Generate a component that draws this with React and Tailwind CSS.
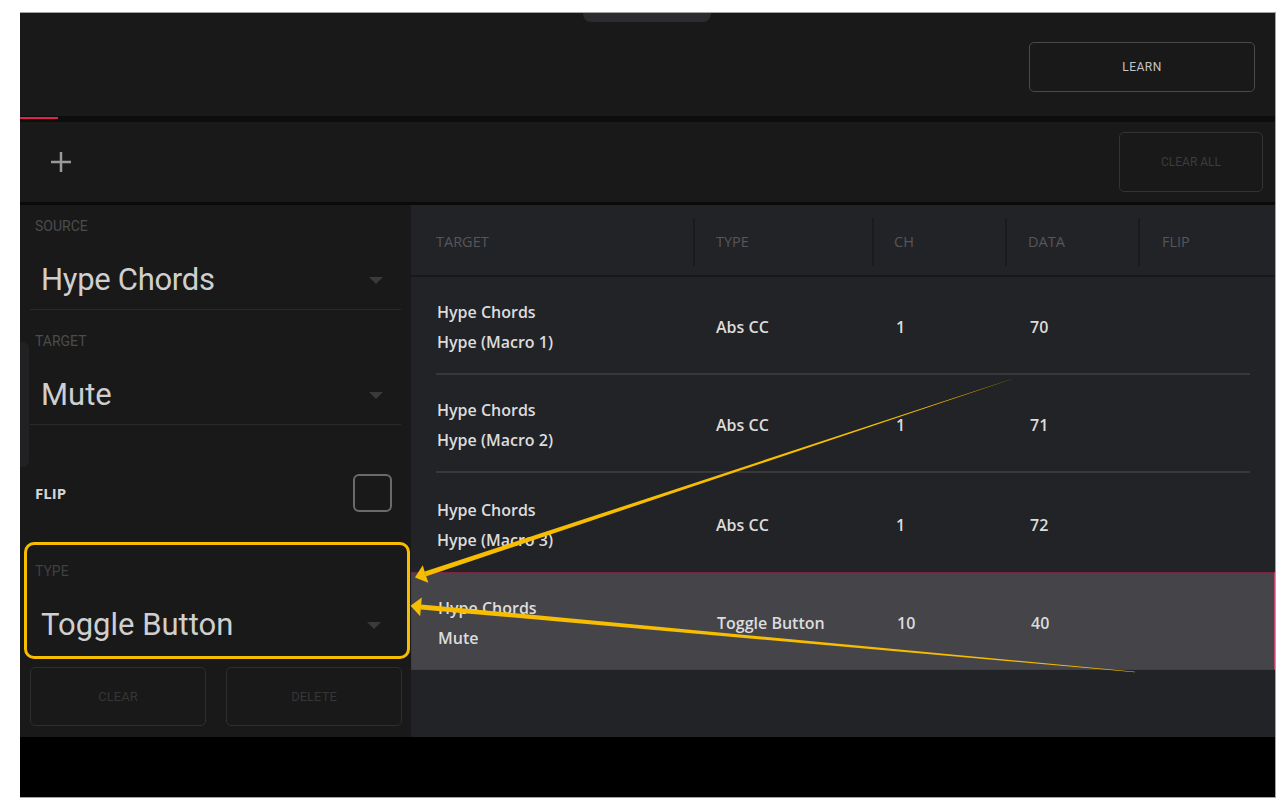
import React from "react";

const F = { fontFamily: "Roboto, 'Open Sans', sans-serif" };
const O = { fontFamily: "'Open Sans', Roboto, sans-serif" };

function Caret() {
  return (
    <svg width="16" height="9" viewBox="0 0 16 9" className="shrink-0">
      <polygon points="1,1 15,1 8,8" fill="#3a3a3c" />
    </svg>
  );
}

function Row({ a, b, type, ch, data, hl }) {
  return (
    <div
      style={O}
      className={
        "flex items-center pt-[4px] text-[16px] font-semibold text-[#dcdcdc] " +
        (hl
          ? "h-[98px] bg-[#454449] border border-[#7a2340] border-r-[#c4456a]"
          : "h-[96px]")
      }
    >
      <div className="w-[282px] pl-[26px] flex flex-col leading-[30px]">
        <span>{a}</span>
        <span>{b}</span>
      </div>
      <div className="w-[179px] pl-[23px]">{type}</div>
      <div className="w-[133px] pl-[24px]">{ch}</div>
      <div className="w-[133px] pl-[25px]">{data}</div>
    </div>
  );
}

function Sep() {
  return <div className="mx-[25px] h-[2px] bg-[#38383c]" />;
}

function HSep() {
  return <div className="w-[2px] h-[48px] bg-[#1b1b1e] shrink-0" />;
}

export default function App() {
  return (
    <div className="w-[1286px] h-[807px] bg-white relative overflow-hidden" style={F}>
      <div className="ml-[20px] mt-[12px] w-[1256px] h-[786px] border-t border-r border-b border-[#a4a4a4] flex flex-col">
        {/* top bar */}
        <div className="h-[103px] bg-[#191919] relative flex justify-end pt-[29px] pr-[20px]">
          <div className="absolute left-[563px] top-0 w-[128px] h-[9px] rounded-b-[8px] bg-[#2b2b30]" />
          <div className="w-[226px] h-[50px] rounded-[5px] border-[1.5px] border-[#4a4a4a] flex items-center justify-center text-[12px] text-[#c4c4c4] tracking-[0.5px]">
            LEARN
          </div>
        </div>
        {/* divider */}
        <div className="h-[6px] bg-[#0d0d0d] relative">
          <div className="absolute left-0 top-[1px] w-[38px] h-[2px] bg-[#e5204c]" />
        </div>
        {/* second bar */}
        <div className="h-[80px] bg-[#191919] flex items-center justify-between pl-[30px] pr-[12px]">
          <svg width="22" height="22" viewBox="0 0 22 22">
            <path d="M11 1v20M1 11h20" stroke="#9a9a9a" strokeWidth="2.5" />
          </svg>
          <div className="w-[144px] h-[60px] rounded-[5px] border-[1.5px] border-[#333333] flex items-center justify-center text-[12px] text-[#3c3c3c]">
            CLEAR ALL
          </div>
        </div>
        <div className="h-[3px] bg-[#0a0a0a]" />
        {/* content */}
        <div className="h-[532px] flex">
          {/* left panel */}
          <div className="w-[391px] bg-[#191919] flex flex-col relative">
            <div className="absolute left-0 top-[137px] w-[9px] h-[125px] rounded-r-[6px] bg-[#212123]" />
            <div className="h-[42px] flex items-center pl-[15px] text-[14px] text-[#4c4c4c]">SOURCE</div>
            <div className="h-[62px] flex items-center justify-between pl-[21px] pr-[27px] pt-[4px]">
              <span className="text-[31px] text-[#cfcfcf] tracking-[-0.3px]">Hype Chords</span>
              <Caret />
            </div>
            <div className="mx-[10px] h-[1px] bg-[#2a2a2a]" />
            <div className="pt-[10px] h-[52px] flex items-center pl-[15px] text-[14px] text-[#4c4c4c]">TARGET</div>
            <div className="h-[62px] flex items-center justify-between pl-[21px] pr-[27px] pt-[4px]">
              <span className="text-[31px] text-[#cfcfcf]">Mute</span>
              <Caret />
            </div>
            <div className="mx-[10px] h-[1px] bg-[#2a2a2a]" />
            <div className="mt-[49px] h-[38px] flex items-center justify-between pl-[15px] pr-[19px]">
              <span style={O} className="text-[15px] font-bold text-[#d6d6d6]">FLIP</span>
              <div className="w-[39px] h-[38px] rounded-[6px] border-2 border-[#6a6a6a]" />
            </div>
            <div className="mt-[30px] ml-[4px] mr-[1px] h-[117px] rounded-[10px] border-[3px] border-[#f7bd00] flex flex-col">
              <div className="h-[52px] flex items-center pl-[8px] text-[14px] text-[#404040]">TYPE</div>
              <div className="h-[56px] flex items-center justify-between pl-[14px] pr-[25px]">
                <span className="text-[31px] text-[#cfcfcf]">Toggle Button</span>
                <Caret />
              </div>
            </div>
            <div className="mt-[8px] flex gap-[20px] pl-[10px]">
              <div className="w-[176px] h-[59px] rounded-[5px] border-[1.5px] border-[#2e2e2e] flex items-center justify-center text-[13px] text-[#363636]">
                CLEAR
              </div>
              <div className="w-[176px] h-[59px] rounded-[5px] border-[1.5px] border-[#2e2e2e] flex items-center justify-center text-[13px] text-[#363636]">
                DELETE
              </div>
            </div>
          </div>
          {/* table */}
          <div className="flex-1 bg-[#222327] flex flex-col">
            <div style={O} className="h-[72px] border-b-2 border-[#18181a] flex items-center pt-[3px] text-[14.5px] text-[#56565a]">
              <div className="w-[282px] pl-[25px]">TARGET</div>
              <HSep />
              <div className="w-[177px] pl-[21px]">TYPE</div>
              <HSep />
              <div className="w-[131px] pl-[20px]">CH</div>
              <HSep />
              <div className="w-[131px] pl-[21px]">DATA</div>
              <HSep />
              <div className="flex-1 pl-[22px]">FLIP</div>
            </div>
            <Row a="Hype Chords" b="Hype (Macro 1)" type="Abs CC" ch="1" data="70" />
            <Sep />
            <Row a="Hype Chords" b="Hype (Macro 2)" type="Abs CC" ch="1" data="71" />
            <Sep />
            <div className="h-[2px]" />
            <Row a="Hype Chords" b="Hype (Macro 3)" type="Abs CC" ch="1" data="72" />
            <div className="h-[1px]" />
            <Row a="Hype Chords" b="Mute" type="Toggle Button" ch="10" data="40" hl />
          </div>
        </div>
        <div className="h-[60px] bg-black" />
      </div>
      {/* annotation arrows */}
      <svg className="absolute left-0 top-0 pointer-events-none" width="1286" height="807" viewBox="0 0 1286 807">
        <polygon points="1012.1,379.1 1011.9,378.9 424.7,571.4 426.3,576.2" fill="#f7bd00" />
        <polygon points="415,577.5 428.3,582.8 422.7,565.3" fill="#f7bd00" />
        <polygon points="1135,672.3 1135,671.7 421.2,604.4 420.8,609.4" fill="#f7bd00" />
        <polygon points="410.5,605.8 420.2,616.2 421.8,597.6" fill="#f7bd00" />
      </svg>
    </div>
  );
}
